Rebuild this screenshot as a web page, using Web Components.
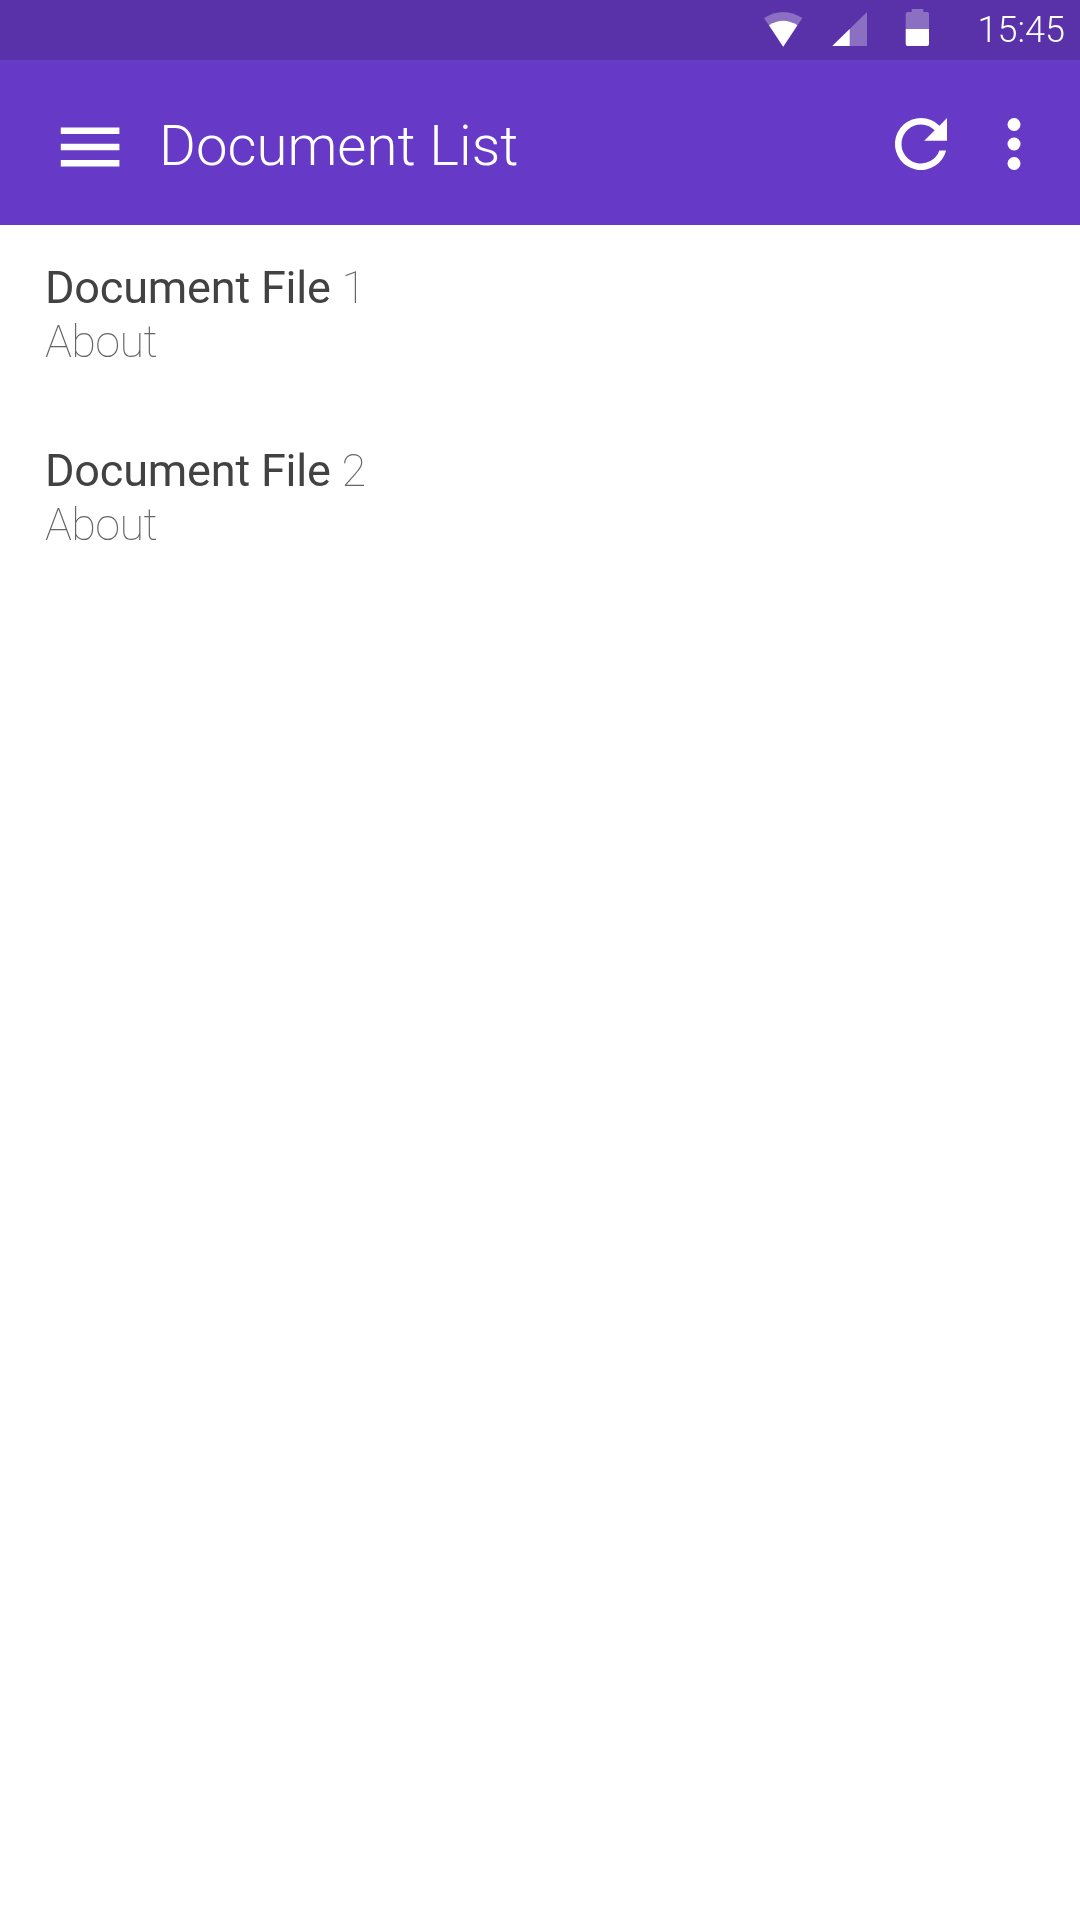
<!DOCTYPE html>
<html lang="en"><head><meta charset="utf-8"><title>Document List</title>
<style>html,body{margin:0;background:#fff}body{font-family:Roboto,"Noto Sans",sans-serif;width:1080px;height:1920px;overflow:hidden}</style></head>
<body>
<document-screen></document-screen>
<script>
const define=(name,html)=>customElements.define(name,class extends HTMLElement{
  constructor(){super();this.attachShadow({mode:'open'}).innerHTML=html;}
});
define('status-bar',`<style>
:host{display:flex;box-sizing:border-box;height:60px;background:#5932a9;color:#fff;justify-content:flex-end;padding-right:15px}
svg{display:block;height:60px}
.time{font-size:36px;font-weight:300;line-height:60px;margin-left:34px;width:88px;text-align:right;white-space:nowrap;will-change:transform}
</style>
<svg width="180" height="60" viewBox="763 0 180 60" fill="#fff">
<path opacity=".3" d="M764 18Q783.2 6 802.4 18L783.2 46.7Z"/><path d="M769 25.3Q783.2 16.2 797.4 25.3L783.2 46.7Z"/>
<path opacity=".3" d="M832.3 46L867 12V46Z"/><path d="M832.3 46L849.7 29V46Z"/>
<path opacity=".3" d="M911.7 9H923.3V12H927Q929 12 929 14V29H905.7V14Q905.7 12 907.7 12H911.7Z"/><path d="M905.7 29H929V44Q929 46 927 46H907.7Q905.7 46 905.7 44Z"/>
</svg><span class="time"><slot></slot></span>`);
define('app-bar',`<style>
:host{display:flex;height:165px;background:#663ac7;color:#fff;align-items:center;box-sizing:border-box;padding:0 27px 0 60px}
.menu{width:60px;height:40px;margin-top:9px}
svg{display:block;flex:none}
h1{font-size:56.25px;font-weight:300;line-height:66px;margin:6px 0 0 39px;flex:1;white-space:nowrap;letter-spacing:.04px;will-change:transform}
.refresh{margin:3px 15px 0 0}.more{margin-top:3px}
</style>
<svg class="menu" width="60" height="40" fill="#fff"><path d="M.8 .4H59.4V7H.8ZM.8 16.7H59.4V23.3H.8ZM.8 33H59.4V39.6H.8Z"/></svg>
<h1><slot></slot></h1>
<svg class="refresh" width="78" height="78" viewBox="0 0 24 24" fill="#fff"><path d="M17.65 6.35A7.96 7.96 0 0 0 12 4a8 8 0 1 0 7.73 10h-2.08A6 6 0 1 1 12 6c1.66 0 3.14.69 4.22 1.78L13 11h7V4Z"/></svg>
<svg class="more" width="78" height="78" viewBox="0 0 24 24" fill="#fff"><circle cx="12" cy="6" r="2"/><circle cx="12" cy="12" r="2"/><circle cx="12" cy="18" r="2"/></svg>`);
define('document-item',`<style>
:host{display:block;height:183px;font-size:45px;line-height:54px;font-weight:100;color:#666;white-space:nowrap;will-change:transform}
.name{font-weight:400;color:#424242;letter-spacing:-.19px}.about{letter-spacing:-.6px}
</style><div><span class="name"><slot></slot></span> <slot name="number"></slot></div><div class="about"><slot name="about"></slot></div>`);
define('document-screen',`<style>
:host{display:flex;flex-direction:column;height:1920px;background:#fff}
main{padding:36px 45px}
</style><status-bar>15:45</status-bar><app-bar>Document List</app-bar>
<main><document-item>Document File<span slot="number">1</span><span slot="about">About</span></document-item>
<document-item>Document File<span slot="number">2</span><span slot="about">About</span></document-item></main>`);
</script>
</body></html>
